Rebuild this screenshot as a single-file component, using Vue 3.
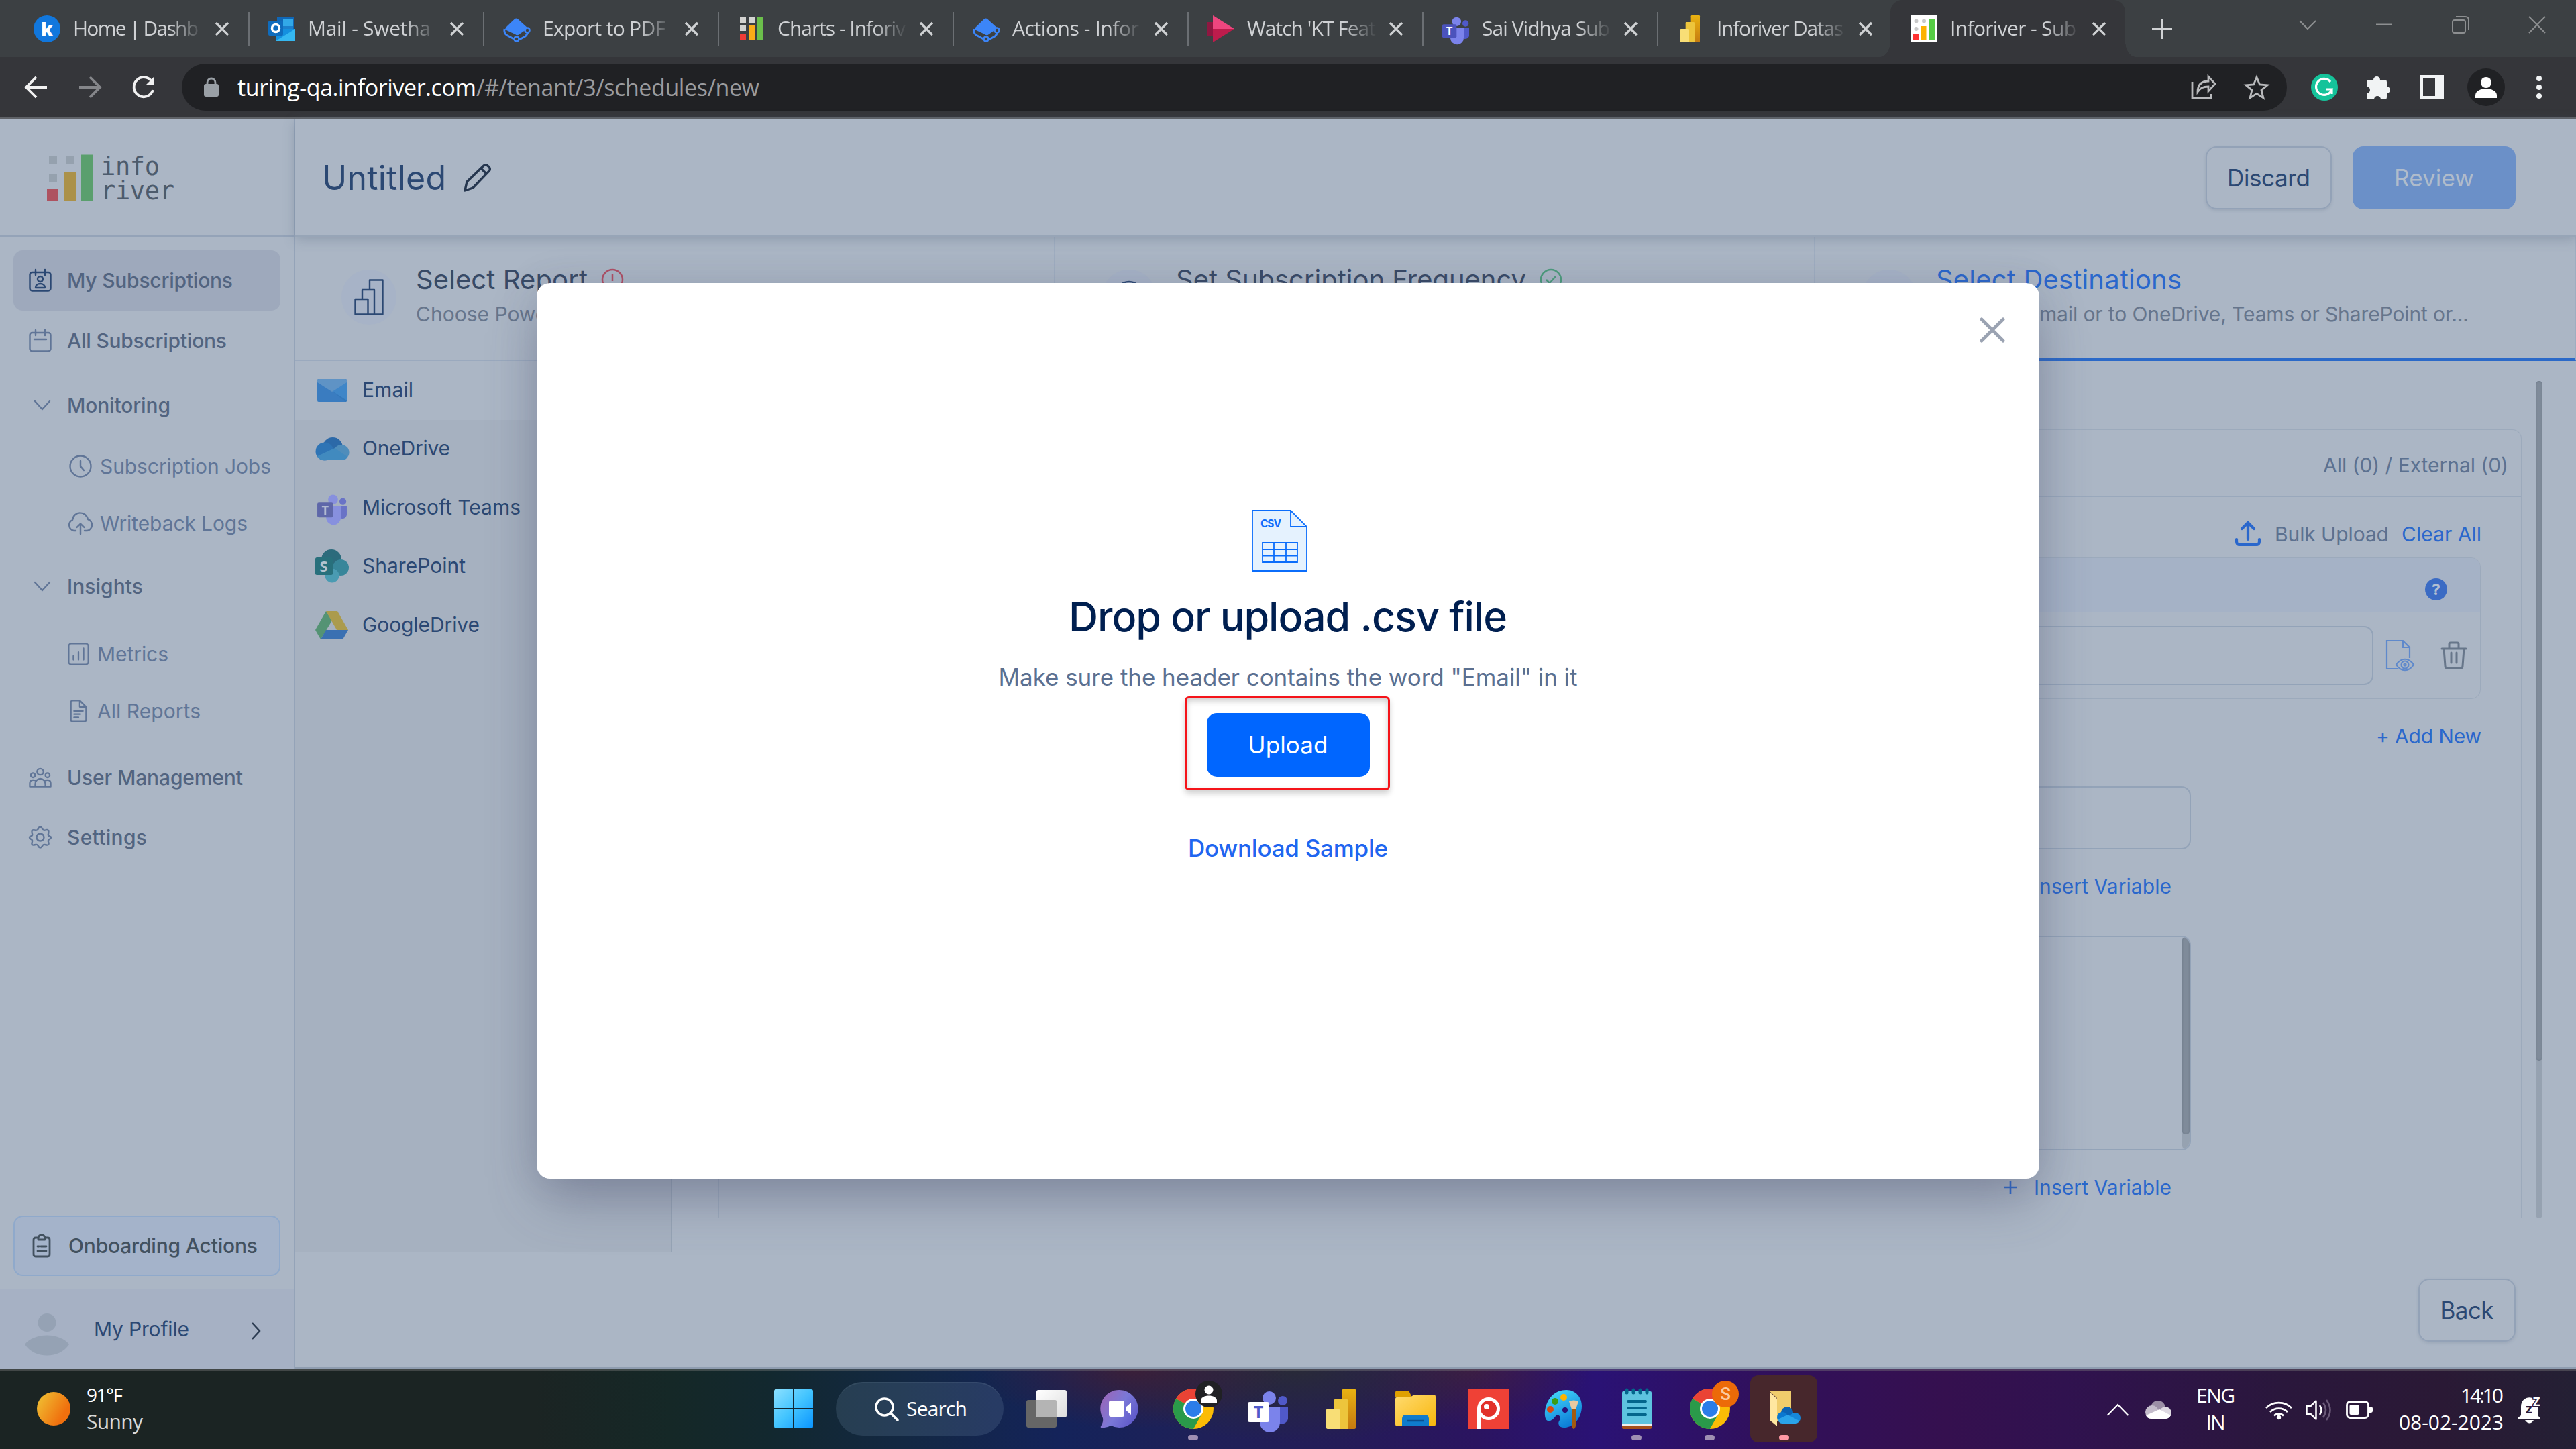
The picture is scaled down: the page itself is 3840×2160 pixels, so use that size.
<script setup>
// Stretches or tightens a label's tracking so that it fills the given width.
const vFit = {
  mounted(el, { value }) {
    const n = el.textContent.length - 1
    const s = (value - el.getBoundingClientRect().width) / n
    el.style.letterSpacing = s + 'px'
    el.style.marginRight = -s + 'px'
  }
}

const teams = (box, letter, edge = '') => `
  <circle cx="52" cy="16" r="7" fill="#5059c9"/><path d="M46 26h14v17a9 9 0 0 1-14 6z" fill="#5059c9"/>
  <circle cx="32" cy="12" r="10" fill="#7b83eb"/><path d="M18 26h30v21a15 15 0 0 1-30 2z" fill="#7b83eb"/>
  <rect y="18" width="32" height="30" rx="3" fill="${box}" ${edge}/>
  <text x="16" y="42" text-anchor="middle" font-family="Open Sans, sans-serif" font-weight="700" font-size="25" fill="${letter}">T</text>`

const chrome = `<circle cx="30" cy="30" r="30" fill="#fbbc05"/>
  <path d="M30 30L4 15a30 30 0 0 1 52 0z" fill="#ea4335"/><path d="M30 30L4 15A30 30 0 0 0 30 60L43 37z" fill="#2a9a4a"/>
  <circle cx="30" cy="30" r="15" fill="#fff"/><circle cx="30" cy="30" r="12" fill="#2b7de9"/>`

const actions = `<path d="M22 5.500L37 19 24 28Q21 30.500 18 28L3 21Q4 17 7 15L17 5.500Q19.500 3.500 22 5.500z" fill="#3c85f8"/>
  <path d="M2 20q-1 6 3 9l11 6M37 24q-1 5-4 7l-9 5" stroke="#3c85f8" stroke-width="2.800" fill="none"/>
  <circle cx="36" cy="22" r="3.500" fill="#3c4043" stroke="#3c85f8" stroke-width="2.600"/><circle cx="20" cy="35" r="3.500" fill="#3c4043" stroke="#3c85f8" stroke-width="2.600"/>`

const powerbi = `<defs><linearGradient id="pb" x2="0" y2="1"><stop stop-color="#eab312"/><stop offset="1" stop-color="#c47a10"/></linearGradient></defs>
  <rect x="24" width="20" height="60" rx="2" fill="url(#pb)"/><path d="M12 17q0-2 2-2h16q2 0 2 2v43H12z" fill="#edc53c"/><path d="M0 32q0-2 2-2h16q2 0 2 2v28H2q-2 0-2-2z" fill="#f8de76"/>`

const icons = {
  k: ['0 0 40 40', `<circle cx="20" cy="20" r="20" fill="#1177dd"/><text x="20" y="30" text-anchor="middle" font-family="Open Sans, sans-serif" font-weight="800" font-size="27" fill="#fff">k</text>`],
  outlook: ['0 0 40 40', `<path d="M13 3h25v20H13z" fill="#1066b5"/><path d="M22 6h15v10H22z" fill="#32a9e8"/><path d="M22 16h15v8H22z" fill="#1b80cc"/><path d="M11 20l29 0v18H11z" fill="#1490df"/><path d="M11 38L40 20v18z" fill="#35b8f1"/><rect y="8" width="22" height="22" rx="2" fill="#0f6cbd"/><circle cx="11" cy="19" r="5.500" fill="none" stroke="#fff" stroke-width="3.500"/>`],
  actions: ['0 0 40 40', actions],
  bars: ['0 0 40 40', `<path d="M3 3h9v8H3zM16 3h9v8h-9zM3 15h9v8H3z" fill="#d3d3d1"/><path d="M3 28h9v9H3z" fill="#ef3b36"/><path d="M16 15h9v22h-9z" fill="#fbac18"/><path d="M29 3h8v34h-8z" fill="#6bbf4b"/>`],
  stream: ['0 0 40 40', `<path d="M0 10h10v21H0z" fill="#8f1741"/><path d="M8 0L40 20H8z" fill="#ee467f"/><path d="M8 40L40 20H8z" fill="#bd1c4c"/>`],
  teamsTab: ['0 0 60 56', teams('#4b53bc', '#fff')],
  teamsList: ['0 0 60 56', `<g opacity=".7">${teams('#4149a0', '#b6bfda')}</g>`],
  teams: ['0 0 60 56', teams('#fff', '#5059c9')],
  pbTab: ['-7 0 60 60', powerbi],
  powerbi: ['0 0 44 60', powerbi],
  inforiver: ['0 0 40 40', `<path d="M0 0h40v40H0z" fill="#fff"/><g fill="#c9c9c9"><circle cx="8.500" cy="8.500" r="3"/><circle cx="20" cy="8.500" r="3"/><circle cx="8.500" cy="20" r="3"/></g><path d="M4 28h9v8H4z" fill="#f33"/><path d="M15.500 16h8v20h-8z" fill="#fdb100"/><path d="M28 5h8v31h-8z" fill="#5c4"/>`],
  subs: ['0 0 34 34', `<rect x="1.500" y="5" width="31" height="27.500" rx="3.500"/><path d="M10 1v8M24 1v8"/><circle cx="17" cy="15" r="4"/><path d="M10 28c0-8 14-8 14 0z"/>`],
  cal: ['0 0 34 34', `<rect x="1.500" y="5" width="31" height="27.500" rx="3.500"/><path d="M10 1v8M24 1v8M8 15h18"/>`],
  down: ['0 0 34 34', `<path d="M9 11l11 12L31 11"/>`],
  clock: ['0 0 34 34', `<circle cx="17" cy="17" r="15.500"/><path d="M17 9v8l5 6"/>`],
  cloudup: ['0 0 40 34', `<path d="M13 28H10A8.500 8.500 0 0 1 8 12C10-2 28-2 31 11a8.800 8.800 0 0 1-1 17h-4M20 33V18M14.500 23l5.500-5.500 5.500 5.500"/>`],
  metrics: ['0 0 34 36', `<rect x="1.500" y="1.500" width="31" height="33" rx="4"/><path d="M9 21v6M17 15v12M25 9v18"/>`],
  report: ['0 0 34 36', `<path d="M7 1.500h12l10 10v20q0 3-3 3H8q-3 0-3-3v-27q0-3 3-3zM19 1.500v10h10M10 18h14M10 23h10M10 28h7"/>`],
  users: ['0 0 36 32', `<circle cx="18" cy="7" r="5"/><circle cx="6.500" cy="12.500" r="3.500"/><circle cx="29.500" cy="12.500" r="3.500"/><path d="M10 30.500V26a8 8 0 0 1 16 0v4.500zM10 30.500H1.500V25q0-5 5-5 3 0 4.500 1M26 30.500h8.500V25q0-5-5-5-3 0-4.500 1"/>`],
  gear: ['0 0 34 34', `<circle cx="17" cy="17" r="5.500"/><path d="M17 1.500c3 0 2.500 4 5 5s5-2 7 .5-1 4.500 0 7 4 1 4 3.500-3 1.500-4 4 2 4.500 0 6.500-4.500-1-7 0-2 4.500-5 4.500-2.500-3.500-5-4.500-5 2-7 0 1-4 0-6.500-4-1.500-4-4 3-1 4-3.500-2-5 0-7 4.500.5 7-.5 2-5 5-5z"/>`],
  clip: ['0 0 28 35', `<path d="M8 5H5Q2 5 2 8v22q0 3 3 3h18q3 0 3-3V8q0-3-3-3h-3M9 8V5q1-4 5-4t5 4v3zM8 18h2M13 18h8M8 25h2M13 25h8" />`],
  mail: ['0 0 44 34', `<rect width="44" height="34" rx="2" fill="#3a7cc0"/><path d="M44 4v28q0 2-2 2L22 18z" fill="#3478ba"/><path d="M44 3v29L22 18z" fill="#3f86c8"/><path d="M0 2q0-2 2-2h40q2 0 2 2v3L22 19 0 5z" fill="#5f93c5"/>`],
  onedrive: ['0 0 50 34', `<circle cx="26" cy="15" r="15" fill="#2c69a8"/><circle cx="14" cy="21" r="13.500" fill="#2e74b5"/><circle cx="39" cy="22.500" r="11.500" fill="#4f8dbb"/><path d="M3 28L29 16l19 13q-2 5-9 5H13Q6 34 3 28z" fill="#418abf"/>`],
  sharepoint: ['0 0 50 50', `<circle cx="24" cy="15" r="15" fill="#2c6b7c"/><circle cx="38" cy="27" r="12" fill="#38869a"/><circle cx="25" cy="39" r="10.500" fill="#4a9bb2"/><rect y="12" width="26" height="26" rx="2.500" fill="#28707c"/><text x="12.500" y="33" text-anchor="middle" font-family="Open Sans, sans-serif" font-weight="700" font-size="22" fill="#b3c3cf">S</text>`],
  gdrive: ['0 0 50 42', `<path d="M16 0L0 28l8 14L25 14z" fill="#549374"/><path d="M16 0h17l16 28H32z" fill="#ab9b4d"/><path d="M16 28h33l-8 14H8z" fill="#3a70b2"/>`],
}

const tabs = [
  ['k', 'Home | Dashb', 187], ['outlook', 'Mail - Swetha', 183], ['actions', 'Export to PDF', 183], ['bars', 'Charts - Inforiv', 191],
  ['actions', 'Actions - Infor', 189], ['stream', "Watch 'KT Feat", 192], ['teamsTab', 'Sai Vidhya Sub', 191], ['pbTab', 'Inforiver Datas', 189],
  ['inforiver', 'Inforiver - Sub', 188]
]

// label, icon, width of label, row height, kind
const menu = [
  ['My Subscriptions', 'subs', 247, 90, 'top on'],
  ['All Subscriptions', 'cal', 238, 90, 'top'],
  ['Monitoring', 'down', 154, 101, 'top'],
  ['Subscription Jobs', 'clock', 255, 82, 'sub wide'],
  ['Writeback Logs', 'cloudup', 220, 88, 'sub wide'],
  ['Insights', 'down', 113, 99, 'top'],
  ['Metrics', 'metrics', 106, 104, 'sub'],
  ['All Reports', 'report', 154, 66, 'sub'],
  ['User Management', 'users', 262, 131, 'top'],
  ['Settings', 'gear', 119, 48, 'top']
]

const destinations = [
  ['Email', 'mail', 76, 44, 34], ['OneDrive', 'onedrive', 131, 50, 34], ['Microsoft Teams', 'teamsList', 236, 44, 41],
  ['SharePoint', 'sharepoint', 154, 50, 50], ['GoogleDrive', 'gdrive', 175, 50, 42]
]
</script>

<template>
  <div class="screen">
    <div class="tabs">
      <div v-for="(t, i) in tabs" :key="i" class="tab" :class="{ active: i === 8, last: i === 7 }">
        <svg class="fav" :viewBox="icons[t[0]][0]" v-html="icons[t[0]][1]" />
        <div class="title"><span v-fit="t[2]">{{ t[1] }}</span></div>
        <svg class="x" viewBox="0 0 22 22"><path d="M2 2l18 18M20 2L2 20" /></svg>
      </div>
      <svg class="plus" viewBox="0 0 32 32"><path d="M16 1v30M1 16h30" /></svg>
      <div class="win">
        <svg width="26" height="26" viewBox="0 0 26 26"><path d="M1 7l12 12L25 7" /></svg>
        <svg width="26" height="26" viewBox="0 0 26 26"><path d="M1 12.500h24" /></svg>
        <svg width="26" height="26" viewBox="0 0 26 26"><rect x="1" y="6" width="19" height="19" rx="3" /><path d="M6 1h14q5 0 5 5v14" /></svg>
        <svg width="26" height="26" viewBox="0 0 26 26"><path d="M1 1l24 24M25 1L1 25" /></svg>
      </div>
    </div>

    <div class="toolbar">
      <svg class="nav" viewBox="0 0 34 34"><path d="M33 17H3M17 2L2 17l15 15" /></svg>
      <svg class="nav dim" viewBox="0 0 34 34"><path d="M1 17h30M17 2l15 15-15 15" /></svg>
      <svg class="nav" viewBox="0 0 34 34"><path d="M30 10A14.500 14.500 0 1 0 31 21" /><path d="M33 1v13H20z" fill="#f1f1f1" stroke="none" /></svg>
      <div class="omni">
        <svg width="22" height="28" viewBox="0 0 22 28"><rect y="9" width="22" height="19" rx="3" fill="#9aa0a6" /><path d="M5 11V7a6 6 0 0 1 12 0v4" fill="none" stroke="#9aa0a6" stroke-width="2.800" /></svg>
        <span v-fit="356" class="host">turing-qa.inforiver.com</span><span v-fit="422" class="path">/#/tenant/3/schedules/new</span>
        <svg class="share" width="38" height="36" viewBox="0 0 38 36"><path d="M2 10v24h28v-6M10 25C10 14 16 9 26 9V2l10 11-10 11v-7c-8 0-12 2-16 8z" /></svg>
        <svg width="38" height="36" viewBox="0 0 38 36"><path d="M19 3l4.500 11 11.500.8-9 7.500 3 11.500-10-6.500-10 6.500 3-11.500-9-7.500 11.500-.8z" /></svg>
      </div>
      <svg class="g" viewBox="0 0 40 40"><circle cx="20" cy="20" r="20" fill="#15c39a" /><path d="M29 12a12 12 0 1 0 2 11H22M31 23v7" fill="none" stroke="#fff" stroke-width="3.200" /></svg>
      <svg class="puz" viewBox="0 0 36 36"><path d="M10 7a5 5 0 0 1 10 0h7q3 0 3 3v7a5 5 0 0 1 0 10v6q0 3-3 3h-6a5 5 0 0 0-10 0H3q-3 0-3-3v-6a5 5 0 0 0 0-10v-7q0-3 3-3z" fill="#f1f3f4" /></svg>
      <svg class="panelicon" viewBox="0 0 36 36"><path fill-rule="evenodd" d="M0 0h36v36H0zM5 5v26h18V5z" fill="#f1f3f4" /></svg>
      <svg class="me" viewBox="0 0 56 56"><circle cx="28" cy="28" r="28" fill="#202124" /><circle cx="28" cy="21" r="8" fill="#fff" /><path d="M12 44v-4c0-13 32-13 32 0v4z" fill="#fff" /></svg>
      <svg class="dots" viewBox="0 0 8 34"><circle cx="4" cy="4" r="4" /><circle cx="4" cy="17" r="4" /><circle cx="4" cy="30" r="4" /></svg>
    </div>

    <div class="page">
      <div class="sidebar">
        <div class="brand">
          <svg width="70" height="70" viewBox="70 230 70 70">
            <path d="M73 233h12v12H73zM98 233h12v12H98zM73 259.500h12v11.500H73z" fill="#95a1ae" />
            <path d="M70 282h17v17H70z" fill="#ae5260" /><path d="M96 256h17v43H96z" fill="#ab9149" /><path d="M121 230.500h18V299h-18z" fill="#5a9f6d" />
          </svg>
          <div class="word"><span v-fit="88">info</span><span v-fit="110">river</span></div>
        </div>
        <div class="menu">
          <div v-for="m in menu" :key="m[0]" class="item" :class="m[4]" :style="{ height: m[3] + 'px' }">
            <svg class="line" :viewBox="icons[m[1]][0]" v-html="icons[m[1]][1]" />
            <span v-fit="m[2]">{{ m[0] }}</span>
          </div>
        </div>
        <div class="onboard">
          <svg class="line" width="28" height="35" :viewBox="icons.clip[0]" v-html="icons.clip[1]" />
          <span v-fit="282">Onboarding Actions</span>
        </div>
        <div class="profile">
          <svg width="66" height="64" viewBox="0 0 66 64"><circle cx="33" cy="13.500" r="13.500" /><path d="M0 46c14-18 52-18 66 0C52 68 14 68 0 46z" /></svg>
          <span v-fit="142">My Profile</span>
          <svg class="chev" width="14" height="26" viewBox="0 0 14 26"><path d="M1 1l11 12L1 25" /></svg>
        </div>
      </div>

      <div class="main">
        <div class="head">
          <span v-fit="185" class="h1">Untitled</span>
          <svg width="42" height="42" viewBox="0 0 42 42"><path d="M2 40l3-13L30 3q3-3 7 1t1 7L14 36zM26 7l8 8" /></svg>
          <div class="btn discard"><span v-fit="124">Discard</span></div>
          <div class="btn review"><span v-fit="119">Review</span></div>
        </div>
        <div class="steps">
          <div class="step">
            <div class="disc"><svg width="44" height="54" viewBox="0 0 44 54"><path d="M1.500 30h19v22.500h-19zM12 30V16h18v36.500M23 16V1.500h19.500v51H20" /></svg></div>
            <div class="st"><div class="t1"><span v-fit="256">Select Report</span><svg width="34" height="34" viewBox="0 0 34 34"><circle cx="17" cy="17" r="15" fill="none" stroke="#b04f64" stroke-width="2.500" /><path d="M17 8v11M17 23v3" stroke="#b04f64" stroke-width="2.500" /></svg></div><div class="t2">Choose Power BI report</div></div>
          </div>
          <div class="step">
            <div class="disc"><svg width="44" height="54" viewBox="0 0 44 54"><circle cx="22" cy="24" r="20" /></svg></div>
            <div class="st"><div class="t1"><span v-fit="522">Set Subscription Frequency</span><svg width="34" height="34" viewBox="0 0 34 34"><circle cx="17" cy="17" r="15" fill="none" stroke="#4c9c7c" stroke-width="2.500" /><path d="M10 17l5 5 9-10" fill="none" stroke="#4c9c7c" stroke-width="2.500" /></svg></div><div class="t2">Set the frequency</div></div>
          </div>
          <div class="step cur">
            <div class="disc"></div>
            <div class="st"><div class="t1"><span v-fit="366">Select Destinations</span></div><div class="t2 r"><span v-fit="658">Email or to OneDrive, Teams or SharePoint or...</span></div></div>
          </div>
        </div>
        <div class="body">
          <div class="dests">
            <div v-for="(d, i) in destinations" :key="d[0]" class="dest" :class="{ on: i === 0 }">
              <div class="di"><svg :width="d[3]" :height="d[4]" :viewBox="icons[d[1]][0]" v-html="icons[d[1]][1]" /></div>
              <span v-fit="d[2]">{{ d[0] }}</span>
            </div>
          </div>
          <div class="card">
            <div class="count"><span v-fit="276">All (0) / External (0)</span></div>
            <div class="tools">
              <svg width="38" height="38" viewBox="0 0 38 38"><path d="M19 28V3M10 12l9-9 9 9M2 28v3q0 5 5 5h24q5 0 5-5v-3" /></svg>
              <span v-fit="170" class="bulk">Bulk Upload</span>
              <span v-fit="119" class="link">Clear All</span>
            </div>
            <div class="table">
              <div class="thead"><svg width="33" height="33" viewBox="0 0 33 33"><circle cx="16.500" cy="16.500" r="16.500" fill="#3b6bc4" /><text x="16.500" y="25" text-anchor="middle" font-family="Inter, sans-serif" font-weight="700" font-size="23" fill="#b3bfd2">?</text></svg></div>
              <div class="trow">
                <div class="field mailfield"></div>
                <svg class="eye" width="42" height="46" viewBox="0 0 42 46"><path d="M17 43H1V1h24l10 10v16M25 1v10h10" /><path d="M15 37c7-11 19-11 26 0-7 11-19 11-26 0z" /><circle cx="28" cy="37" r="5.500" /><circle cx="28" cy="37" r="1.500" /></svg>
                <svg class="bin" width="38" height="42" viewBox="0 0 38 42"><path d="M1 11h36M12 10V4q0-2 2-2h10q2 0 2 2v6M4 11l2 26q0 3 3 3h20q3 0 3-3l2-26M15 17v15M23 17v15" /></svg>
              </div>
            </div>
            <div class="addnew link"><span v-fit="157">+ Add New</span></div>
            <div class="field subject"></div>
            <div class="var link"><svg width="22" height="22" viewBox="0 0 22 22"><path d="M11 1v20M1 11h20" /></svg><span v-fit="205">Insert Variable</span></div>
            <div class="field area"><div class="track"><div class="thumb"></div></div></div>
            <div class="var link second"><svg width="22" height="22" viewBox="0 0 22 22"><path d="M11 1v20M1 11h20" /></svg><span v-fit="205">Insert Variable</span></div>
          </div>
          <div class="scroll"><div class="thumb"></div></div>
        </div>
        <div class="foot"><div class="btn back"><span v-fit="80">Back</span></div></div>
      </div>

      <div class="modal">
        <svg class="close" width="38" height="38" viewBox="0 0 38 38"><path d="M3 3l32 32M35 3L3 35" /></svg>
        <svg class="csv" width="84" height="92" viewBox="0 0 84 92"><path d="M1 1h57l24 24v66H1z" fill="#e5f2fe" /><path d="M58 1v24h24" /><path d="M16 49h52v29H16zM33 49v29M51 49v29M16 59h52M16 68.500h52" /><text x="13" y="25.500" font-family="Inter, sans-serif" font-weight="700" font-size="15.500" textLength="31">CSV</text></svg>
        <div class="mt"><span v-fit="654">Drop or upload .csv file</span></div>
        <div class="ms"><span v-fit="863">Make sure the header contains the word "Email" in it</span></div>
        <div class="redbox"><div class="up"><span v-fit="119">Upload</span></div></div>
        <div class="dl"><span v-fit="298">Download Sample</span></div>
      </div>
    </div>

    <div class="taskbar">
      <div class="weather"><div class="sun"></div><div class="two"><span v-fit="54" class="deg">91°F</span><span v-fit="84" class="soft">Sunny</span></div></div>
      <div class="apps">
        <svg width="58" height="58" viewBox="0 0 58 58"><defs><linearGradient id="w" gradientUnits="userSpaceOnUse" x1="0" y1="0" x2="58" y2="58"><stop stop-color="#8be0ff" /><stop offset=".5" stop-color="#42c4ff" /><stop offset="1" stop-color="#0a95ff" /></linearGradient></defs><path d="M0 3q0-3 3-3h25v28H0zM30 0h25q3 0 3 3v25H30zM0 30h28v28H3q-3 0-3-3zM30 30h28v25q0 3-3 3H30z" fill="url(#w)" /></svg>
        <div class="search"><svg width="36" height="36" viewBox="0 0 36 36"><circle cx="14.500" cy="14.500" r="12.500" /><path d="M23.500 23.500L34 34" /></svg><span v-fit="91">Search</span></div>
        <svg class="tv" width="60" height="56" viewBox="0 0 60 56"><defs><linearGradient id="tw" x2="1" y2="1"><stop stop-color="#fff" /><stop offset="1" stop-color="#ddd" /></linearGradient></defs><rect y="15" width="45" height="41" rx="3" fill="#666" /><rect x="15" width="45" height="41" rx="3" fill="url(#tw)" /><path d="M15 15h28q2 0 2 2v24H18q-3 0-3-3z" fill="#b4b4b4" /></svg>
        <svg class="chat" width="56" height="56" viewBox="0 0 56 56"><defs><linearGradient id="ch" x1="0" y1=".2" x2="1" y2=".8"><stop stop-color="#9a66b8" /><stop offset=".5" stop-color="#7a78d8" /><stop offset="1" stop-color="#5b55c8" /></linearGradient></defs><path d="M28 0a28 28 0 1 1-13 53Q8 57 1 56q-2 0-1-2 4-6 3-12A28 28 0 0 1 28 0z" fill="url(#ch)" /><rect x="12" y="16" width="23" height="24" rx="3" fill="#fff" /><path d="M37 26l8-7v18l-8-7z" fill="#fff" /></svg>
        <div class="app chrome1"><svg width="60" height="60" viewBox="0 0 60 60" v-html="chrome" /><svg class="badge" viewBox="0 0 40 40"><circle cx="20" cy="20" r="20" fill="#202124" /><circle cx="20" cy="14" r="6.500" fill="#fff" /><path d="M8 33v-3c0-10 24-10 24 0v3z" fill="#fff" /></svg><i class="ind"></i></div>
        <svg class="tm" width="60" height="56" :viewBox="icons.teams[0]" v-html="icons.teams[1]" />
        <svg class="pb" width="44" height="60" :viewBox="icons.powerbi[0]" v-html="icons.powerbi[1]" />
        <svg class="ex" width="60" height="54" viewBox="0 0 60 54"><defs><linearGradient id="fo" x2="1" y2="1"><stop stop-color="#ffdb70" /><stop offset="1" stop-color="#f8b60c" /></linearGradient></defs><path d="M0 3q0-3 3-3h15q2 0 3 2l4 8H0z" fill="#e0a000" /><path d="M0 12q0-2 2-2h18q3 0 5-2 2-2 5-2h27q3 0 3 3v41q0 3-3 3H3q-3 0-3-3z" fill="url(#fo)" /><path d="M10 53V42q0-6 6-6h28q6 0 6 6v11z" fill="#0f7ccd" /><path d="M18 45h24" stroke="#0b4f8d" stroke-width="2.500" /></svg>
        <svg class="pp" width="60" height="60" viewBox="0 0 60 60"><path d="M0 0h60v60H0z" fill="#ef4136" /><circle cx="30" cy="30" r="14.500" fill="#e2312a" stroke="#fff" stroke-width="5" /><path d="M15.500 60V30" stroke="#fff" stroke-width="5" /><circle cx="27" cy="27" r="4" fill="#fff" /></svg>
        <svg class="pt" width="56" height="60" viewBox="0 0 56 60"><defs><linearGradient id="pa" x2=".5" y2="1"><stop stop-color="#4ae0ff" /><stop offset="1" stop-color="#0d7fd8" /></linearGradient></defs><path d="M33 2c14 0 23 11 23 24 0 18-12 31-25 32-9 1-12-6-8-11 3-5-2-10-6-6-4 5-7 8-12 7C-4 45 0 2 33 2z" fill="url(#pa)" /><circle cx="31" cy="32" r="4" fill="#29127a" /><circle cx="9" cy="31" r="5" fill="#d9480f" /><circle cx="16" cy="19" r="5" fill="#3a9c14" /><circle cx="29" cy="13" r="5" fill="#ffb400" /><path d="M37 19q7-3 14 0l-4 12h-6z" fill="#e8c9a0" /><path d="M41 31h6v25q-3 8-6 0z" fill="#a35a10" /></svg>
        <div class="app note"><svg width="44" height="60" viewBox="0 0 44 60"><path d="M0 53h44v5q0 2-2 2H2q-2 0-2-2z" fill="#a5501a" /><path d="M0 50h44v5H0z" fill="#eee" /><path d="M0 6q0-2 2-2h40q2 0 2 2v46H0z" fill="#5dc3df" /><path d="M9 19h26M9 29h26M9 39h26" stroke="#03668c" stroke-width="4" stroke-linecap="round" /><path d="M7 2v4M17 2v4M27 2v4M37 2v4" stroke="#03668c" stroke-width="5" stroke-linecap="round" /></svg><i class="ind"></i></div>
        <div class="app chrome2"><svg width="60" height="60" viewBox="0 0 60 60" v-html="chrome" /><svg class="badge" viewBox="0 0 40 40"><circle cx="20" cy="20" r="20" fill="#ec6a08" /><text x="20" y="29" text-anchor="middle" font-family="Roboto, sans-serif" font-weight="500" font-size="26" fill="#fbc9a0">S</text></svg><i class="ind"></i></div>
        <div class="app files"><svg width="46" height="52" viewBox="0 0 46 52"><path d="M0 0h32v44H11V10z" fill="#f0cd6c" /><path d="M0 1l11 10v41L0 43z" fill="#ffe7a0" /><circle cx="26" cy="32" r="9" fill="#0a63b5" /><circle cx="19" cy="39" r="8" fill="#0a78d0" /><circle cx="38" cy="40" r="8" fill="#1687d9" /><path d="M12 42l15-7 17 9q-2 4-6 4H19q-5 0-7-6z" fill="#2aa4ea" /></svg><i class="ind"></i></div>
      </div>
      <div class="tray">
        <svg width="34" height="20" viewBox="0 0 34 20"><path d="M1.500 18L17 2l15.500 16" fill="none" stroke="#fff" stroke-width="2.200" /></svg>
        <svg class="od" width="40" height="27" viewBox="0 0 40 27"><circle cx="20" cy="11" r="11" fill="#9c8fa6" /><circle cx="11" cy="17" r="10" fill="#c4bccb" /><circle cx="31" cy="18" r="9" fill="#ded9e2" /><path d="M2 22l20-9 17 9q-3 5-8 5H10q-6 0-8-5z" fill="#fff" /></svg>
        <div class="two mid lang"><span v-fit="58">ENG</span><span v-fit="29">IN</span></div>
        <svg class="wifi" width="42" height="30" viewBox="0 0 42 30"><path d="M2 12a27 27 0 0 1 38 0M8 18a18.500 18.500 0 0 1 26 0M14 23.500a10 10 0 0 1 14 0" fill="none" stroke="#fff" stroke-width="2.800" /><circle cx="21" cy="26" r="3.200" fill="#fff" /></svg>
        <svg class="snd" width="40" height="34" viewBox="0 0 40 34"><path d="M1.500 11h6l8-7.500v27L7.500 23h-6z" fill="none" stroke="#fff" stroke-width="2.500" stroke-linejoin="round" /><path d="M21 10q5 7 0 14" fill="none" stroke="#fff" stroke-width="2.500" /><path d="M26 6q8 11 0 22M31 2q11 15 0 30" fill="none" stroke="#6b5a78" stroke-width="2.500" /></svg>
        <svg class="bat" width="40" height="27" viewBox="0 0 40 27"><rect x="1.500" y="1.500" width="32" height="24" rx="5" fill="none" stroke="#fff" stroke-width="2.800" /><rect x="5.500" y="6" width="14" height="15" rx="2" fill="#fff" /><path d="M35 9h2q3 0 3 3v3q0 3-3 3h-2z" fill="#fff" /></svg>
        <div class="two end time"><span v-fit="64">14:10</span><span v-fit="156">08-02-2023</span></div>
        <svg class="bell" width="38" height="40" viewBox="0 0 38 40"><path d="M4 28V15C4-3 28-3 29 13v15l3 3v2H0v-2zM10 35h13q-6 9-13 0z" fill="#fff" /><text x="11" y="25" font-family="Open Sans, sans-serif" font-weight="700" font-size="20" fill="#2a1a38">z</text><text x="22" y="14" font-family="Open Sans, sans-serif" font-weight="700" font-size="18" fill="#fff" stroke="#2a1a38" stroke-width="3" paint-order="stroke">Z</text></svg>
      </div>
    </div>
  </div>
</template>

<style>
body { background: #abb6c5; overflow: hidden; }
</style>

<style scoped>
.screen { width: 3840px; height: 2160px; display: flex; flex-direction: column; overflow: hidden; font-family: Inter, "Liberation Sans", sans-serif; font-size: 30px; line-height: 40px; white-space: nowrap; color: #2b4873; }
.screen * { box-sizing: border-box; flex-shrink: 0; }
svg { display: block; overflow: visible; }
span { display: inline-block; white-space: pre; }

.tabs { height: 85px; background: #3c4043; display: flex; align-items: center; padding-left: 22px; font-family: "Open Sans", "Noto Sans", sans-serif; color: #cfd1d4; }
.tab { width: 350px; height: 50px; display: flex; align-items: center; padding-left: 28px; border-right: 2px solid #6b6f73; }
.tab.last { border-color: transparent; }
.tab.active { position: relative; height: 85px; margin-left: -4px; padding-left: 30px; background: #35363a; border: 0; border-radius: 18px 18px 0 0; }
.tab.active::before, .tab.active::after { content: ""; position: absolute; bottom: 0; width: 16px; height: 24px; }
.tab.active::before { left: -16px; background: radial-gradient(ellipse 16px 24px at 0 0, transparent 98%, #35363a); }
.tab.active::after { right: -16px; background: radial-gradient(ellipse 16px 24px at 100% 0, transparent 98%, #35363a); }
.fav { width: 40px; height: 40px; }
.title { width: 194px; margin-left: 19px; height: 42px; overflow: hidden; -webkit-mask-image: linear-gradient(90deg, #000 74%, transparent 100%); mask-image: linear-gradient(90deg, #000 74%, transparent 100%); }
.x { width: 22px; height: 22px; margin-left: 17px; fill: none; stroke: #d0d2d4; stroke-width: 3.2; }
.plus { width: 32px; height: 32px; margin-left: 39px; fill: none; stroke: #d0d2d4; stroke-width: 4; }
.win { display: flex; gap: 88px; margin-left: 188px; margin-bottom: 12px; fill: none; stroke: #8d8f91; stroke-width: 2; }

.toolbar { height: 93px; background: #35363a; border-bottom: 3px solid #5f6267; display: flex; align-items: center; padding-left: 37px; }
.nav { width: 34px; height: 34px; margin-right: 46px; fill: none; stroke: #f1f1f1; stroke-width: 3.8; }
.nav.dim { stroke: #85868a; }
.omni { width: 3138px; height: 70px; margin-left: -6px; border-radius: 35px; background: #202124; display: flex; align-items: center; padding-left: 33px; font-family: "Open Sans", "Noto Sans", sans-serif; font-size: 34px; line-height: 50px; }
.host { color: #fff; margin-left: 28px; }
.path { color: #9a9b9e; }
.omni .share { margin-left: auto; margin-right: 41px; }
.omni .share, .omni .share + svg { fill: none; stroke: #b9babc; stroke-width: 2.8; }
.omni .share + svg { margin-right: 26px; }
.g { width: 40px; height: 40px; margin-left: 36px; }
.puz { width: 36px; height: 36px; margin-left: 43px; }
.panelicon { width: 36px; height: 36px; margin-left: 43px; }
.me { width: 56px; height: 56px; margin-left: 35px; }
.dots { width: 8px; height: 34px; margin-left: 47px; fill: #f1f3f4; }

.page { height: 1862px; display: flex; position: relative; background: #abb6c5; }
.sidebar { width: 440px; border-right: 2px solid #94a3b8; display: flex; flex-direction: column; }
.brand { height: 175px; border-bottom: 2px solid #94a3b8; display: flex; padding: 52px 0 0 70px; }
.word { display: flex; flex-direction: column; align-items: flex-start; margin-left: 10px; font-family: "DejaVu Sans Mono", monospace; font-size: 37px; line-height: 36px; color: #4d5b6c; margin-top: 1px; }
.menu { height: 1459px; padding: 20px 20px 0; color: #526480; }
.item { display: flex; align-items: center; padding-left: 23px; font-weight: 500; }
.item.on { background: #9ea9bc; border-radius: 14px; }
.line { fill: none; stroke: #607597; stroke-width: 2.4; stroke-linecap: round; stroke-linejoin: round; }
.item .line { width: 34px; height: 34px; margin-right: 23px; }
.item.on .line { stroke: #2b4873; }
.item.sub { font-weight: 400; color: #607597; padding-left: 80px; }
.item.sub .line { margin-right: 11px; }
.item.wide .line { width: 40px; margin-right: 9px; }
.onboard { height: 90px; margin: 0 20px; border: 2px solid #8fa9cb; border-radius: 14px; background: #a4b3ca; display: flex; align-items: center; padding-left: 26px; font-weight: 500; color: #42515f; }
.onboard .line { margin-right: 26px; stroke: #42515f; stroke-width: 2.8; }
.profile { height: 118px; margin-top: auto; background: #a6b1c4; display: flex; align-items: center; padding-left: 37px; }
.profile svg { fill: #95a2b4; margin-top: 17px; }
.profile span { margin-left: 37px; }
.profile .chev { margin: 6px 0 0 93px; fill: none; stroke: #2a3a50; stroke-width: 2.4; }

.main { width: 3400px; display: flex; flex-direction: column; border-bottom: 2px solid #8f9db0; }
.head { height: 175px; border-bottom: 2px solid #97a5b7; display: flex; align-items: center; padding-left: 40px; box-shadow: 0 4px 16px rgba(90, 105, 130, .35); position: relative; }
.h1 { font-size: 50px; line-height: 60px; }
.head svg { margin-left: 26px; fill: none; stroke: #25364f; stroke-width: 3.4; stroke-linejoin: round; }
.btn { height: 94px; border: 2px solid #93a2b7; border-radius: 16px; display: flex; align-items: center; justify-content: center; font-size: 35px; box-shadow: 0 2px 4px rgba(90, 105, 130, .2); }
.discard { width: 188px; margin-left: auto; }
.review { width: 243px; margin: 0 90px 0 31px; background: #6b90c8; border: 0; color: #b0bccb; box-shadow: none; }
.steps { height: 185px; display: flex; }
.step { width: 1133px; display: flex; padding: 44px 0 0 69px; border-right: 2px solid #9fadc0; border-bottom: 2px solid #9aa9be; }
.step.cur { width: 1134px; border-bottom: 5px solid #2b69c8; }
.disc { width: 82px; height: 82px; border-radius: 50%; background: #a7b3c7; display: flex; align-items: center; justify-content: center; margin-top: 5px; }
.disc svg { fill: none; stroke: #2b4873; stroke-width: 2.4; stroke-linejoin: round; }
.st { margin-left: 29px; }
.t1 { display: flex; align-items: center; height: 40px; font-size: 40px; color: #384a66; }
.t1 svg { margin-left: 20px; }
.cur .t1 { color: #2a67cc; }
.t2 { margin-top: 11px; color: #66758c; }
.t2.r { width: 794px; text-align: right; }
.body { height: 1328px; display: flex; }
.dests { width: 561px; background: #a6b1c0; border-right: 1px solid #96a4b5; }
.dest { height: 87.5px; display: flex; align-items: center; }
.dest.on { background: #abb6c5; }
.di { width: 50px; margin-left: 30px; display: flex; justify-content: center; }
.dest span { margin: -2px 0 0 20px; }
.card { width: 2688px; height: 1176px; margin: 102px 0 0 70px; border: 1px solid #9caabc; border-bottom: 0; border-radius: 14px 14px 0 0; }
.count { height: 100px; border-bottom: 1px solid #99a8bc; display: flex; justify-content: flex-end; align-items: center; padding: 4px 19px 0 0; color: #5c7190; }
.tools { height: 90px; display: flex; justify-content: flex-end; padding: 35px 59px 0 0; }
.tools svg { fill: none; stroke: #2a67cc; stroke-width: 4.2; stroke-linecap: round; stroke-linejoin: round; }
.bulk { color: #5c7190; margin-left: 21px; }
.tools .link { margin-left: 19px; }
.link { color: #2a67cc; }
.table { height: 211px; margin: 0 60px; border: 1px solid #9caabc; border-radius: 14px; overflow: hidden; }
.thead { height: 81px; background: #a5b2c6; border-bottom: 1px solid #99a8bc; display: flex; align-items: center; justify-content: flex-end; padding: 12px 49px 0 0; }
.trow { display: flex; height: 128px; align-items: center; }
.field { border: 2px solid #93a3b8; border-radius: 14px; }
.mailfield { width: 2384px; height: 88px; margin-left: 21px; }
.eye { margin-left: 19px; fill: none; stroke: #5f89cb; stroke-width: 2.2; }
.bin { margin-left: 40px; fill: none; stroke: #67768a; stroke-width: 3; stroke-linecap: round; }
.addnew { margin-top: 35px; text-align: right; padding-right: 59px; }
.subject { width: 2134px; height: 94px; margin: 55px 0 0 60px; }
.var { display: flex; align-items: center; height: 40px; margin: 35px 0 0 1914px; }
.var svg { stroke: #2a67cc; stroke-width: 2.6; }
.var span { margin-left: 24px; }
.area { width: 2134px; height: 320px; margin: 54px 0 0 60px; display: flex; justify-content: flex-end; overflow: hidden; }
.track { width: 11px; height: 316px; background: #96a2b1; border-radius: 5px; }
.thumb { background: #7f8b9a; border-radius: 5px; box-shadow: inset 0 0 3px #697686; height: 294px; }
.second { margin-top: 35px; }
.scroll { width: 10px; height: 1248px; margin: 30px 0 0 21px; background: #96a2b1; border-radius: 5px; }
.scroll .thumb { height: 1013px; }
.foot { display: flex; justify-content: flex-end; padding: 40px 90px 0 0; }
.back { width: 145px; }

.modal { position: absolute; left: 800px; top: 244px; width: 2240px; height: 1335px; border-radius: 20px; background: #fff; box-shadow: 0 36px 80px -10px rgba(75, 80, 110, .45), 0 0 60px rgba(75, 80, 110, .12); display: flex; flex-direction: column; align-items: center; }
.close { align-self: flex-end; margin: 51px 51px 0 0; fill: none; stroke: #9ba3b2; stroke-width: 5; stroke-linecap: round; }
.csv { margin: 249px 25px 0 0; fill: none; stroke: #0b6dfb; stroke-width: 1.8; }
.csv text { fill: #0b6dfb; stroke: none; }
.mt { height: 76px; margin-top: 29px; line-height: 76px; font-size: 61px; font-weight: 500; color: #001f50; }
.ms { height: 50px; margin-top: 27px; line-height: 50px; font-size: 35px; color: #5b7091; }
.redbox { width: 306px; height: 140px; margin: 4px 0 0 -3px; border: 3px solid #f5141a; border-radius: 6px; display: flex; align-items: center; justify-content: center; padding: 4px 0 0 3px; box-shadow: 0 5px 8px rgba(0, 0, 0, .18), inset 0 4px 10px rgba(0, 0, 0, .2); }
.up { width: 243px; height: 95px; border-radius: 15px; background: #0066ff; color: #fff; font-size: 35px; display: flex; align-items: center; justify-content: center; }
.dl { margin-top: 66px; font-size: 35px; font-weight: 500; color: #1f66f0; }

.taskbar { height: 120px; border-top: 3px solid rgba(125, 125, 125, .4); display: flex; align-items: center; color: #fff; font-family: "Open Sans", "Noto Sans", sans-serif;
  background: radial-gradient(ellipse 230px 90px at 1690px 0, rgba(66, 30, 50, .8), transparent) border-box, radial-gradient(ellipse 300px 110px at 1930px 0, rgba(42, 44, 50, .85), transparent) border-box, radial-gradient(ellipse 180px 90px at 2190px 0, rgba(66, 30, 62, .8), transparent) border-box, linear-gradient(90deg, #1b2423 0, #1b2423 800px, #152827 1000px, #12282f 1150px, #132843 1350px, #14235a 1580px, #1f2058 1800px, #241c58 2000px, #2b1460 2200px, #2a1275 2380px, #31105a 2650px, #35104f 2900px, #30124f 3080px, #2a173c 3400px, #2a1935 3640px, #242034 3840px) border-box; }
.weather { width: 300px; display: flex; align-items: center; padding-left: 55px; }
.sun { width: 50px; height: 50px; border-radius: 50%; background: linear-gradient(120deg, #f0bb30 10%, #f0700e 75%); margin-bottom: 4px; }
.two { display: flex; flex-direction: column; align-items: flex-start; margin-top: -3px; }
.weather .two { margin: -5px 0 0 24px; }
.deg { font-size: 28px; }
.soft { color: #d6d8d8; }
.mid { align-items: center; }
.end { align-items: flex-end; }
.apps { display: flex; align-items: center; margin-left: 854px; height: 117px; padding-bottom: 3px; }
.search { width: 250px; height: 80px; margin: 0 0 0 34px; border-radius: 40px; background: rgba(120, 150, 180, .2); border-top: 2px solid rgba(150, 170, 190, .12); display: flex; align-items: center; padding-left: 58px; }
.search svg { fill: none; stroke: #fff; stroke-width: 3.6; stroke-linecap: round; }
.search span { margin-left: 11px; margin-top: -2px; }
.tv { margin-left: 34px; }
.chat { margin-left: 51px; }
.app { position: relative; width: 60px; height: 60px; display: flex; justify-content: center; align-items: center; }
.chrome1 { margin-left: 52px; }
.badge { position: absolute; width: 40px; height: 40px; left: 33px; top: -12px; }
.ind { position: absolute; left: 22px; top: 69px; width: 15px; height: 8px; border-radius: 4px; background: #9f8fb2; }
.tm { margin-left: 51px; }
.pb { margin-left: 57px; }
.ex { margin-left: 59px; }
.pp { margin-left: 49px; }
.pt { margin-left: 53px; }
.note { margin-left: 52px; }
.chrome2 { margin-left: 49px; }
.files { width: 100px; height: 100px; margin-left: 30px; border-radius: 12px; background: #47272c; padding: 0 0 0 4px; }
.files .ind { left: 43px; top: 89px; background: #ff99a4; }
.tray { display: flex; align-items: center; margin-left: auto; padding-right: 48px; }
.od { margin-left: 23px; }
.lang { width: 58px; margin-left: 37px; }
.wifi { margin-left: 44px; }
.snd { margin-left: 19px; }
.bat { margin-left: 20px; }
.time { width: 156px; margin-left: 39px; }
.bell { margin-left: 22px; }
</style>
